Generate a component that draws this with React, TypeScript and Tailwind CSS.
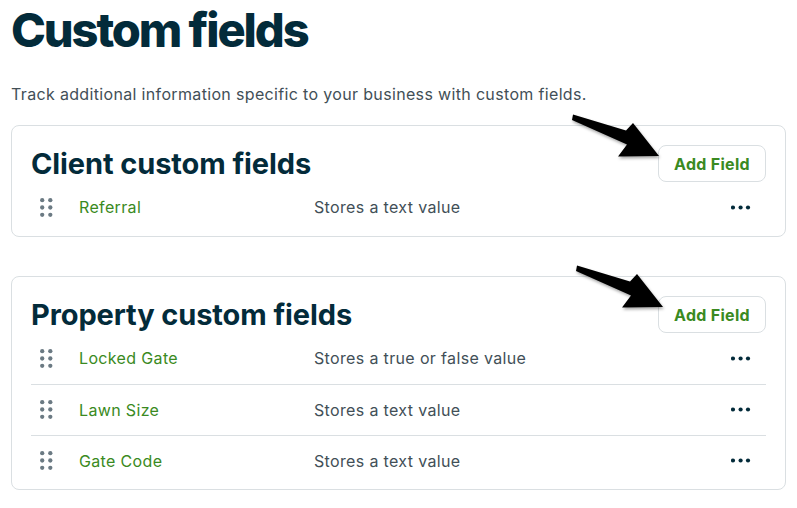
import React from "react";

function DragHandle() {
  return (
    <svg width="13" height="19" viewBox="0 0 13 19" className="shrink-0">
      {[2.2, 9.5, 16.8].map((cy) =>
        [2.2, 10.3].map((cx) => (
          <circle key={`${cx}-${cy}`} cx={cx} cy={cy} r="2.15" fill="#6b7a83" />
        ))
      )}
    </svg>
  );
}

function Dots() {
  return (
    <svg width="20" height="5" viewBox="0 0 20 5">
      <circle cx="2" cy="2.5" r="2.1" fill="#032b3a" />
      <circle cx="9.6" cy="2.5" r="2.1" fill="#032b3a" />
      <circle cx="17" cy="2.5" r="2.1" fill="#032b3a" />
    </svg>
  );
}

function Arrow({ className }: { className: string }) {
  return (
    <svg
      width="100"
      height="56"
      viewBox="0 0 100 56"
      className={className}
      style={{ filter: "drop-shadow(1px 2px 1.5px rgba(0,0,0,0.35))" }}
    >
      <polygon points="8,6.5 61,22.5 68,15 94,48 53,48.5 62,36.5 7,12" fill="#000" />
    </svg>
  );
}

type Field = { name: string; desc: string };

function Card({
  title,
  fields,
  arrowClass,
}: {
  title: string;
  fields: Field[];
  arrowClass: string;
}) {
  return (
    <div className="relative rounded-[8px] border border-[#dadfe2] px-[19px] pt-[19px] pb-[3px]">
      <Arrow className={arrowClass} />
      <div className="flex items-center justify-between">
        <h2 className="text-[29px] leading-[34px] font-bold text-[#032b3a] tracking-[-0.1px]">
          {title}
        </h2>
        <button className="h-[37px] w-[108px] rounded-[8px] border border-[#dadfe2] bg-white text-[16px] font-bold tracking-[0.3px] text-[#3a8a22]">
          Add Field
        </button>
      </div>
      <div>
        {fields.map((f, i) => (
          <div
            key={f.name}
            className={`flex h-[51px] items-center pb-[1px] tracking-[0.35px] ${i > 0 ? "border-t border-[#dadfe2]" : ""}`}
          >
            <div className="w-[48px] pl-[9px] flex items-center">
              <DragHandle />
            </div>
            <div className="w-[235px] text-[16px] text-[#3a8a22]">{f.name}</div>
            <div className="flex-1 text-[16px] text-[#424f57]">{f.desc}</div>
            <div className="pr-[15px] flex items-center">
              <Dots />
            </div>
          </div>
        ))}
      </div>
    </div>
  );
}

export default function App() {
  return (
    <div
      className="w-[797px] h-[508px] bg-white px-[11px] pt-[2px] overflow-hidden"
      style={{ fontFamily: "Inter, 'Noto Sans', sans-serif" }}
    >
      <h1 className="text-[47px] leading-[56px] font-extrabold text-[#032b3a] tracking-[-2.1px]">
        Custom fields
      </h1>
      <p className="mt-[24px] text-[16px] leading-[24px] tracking-[0.34px] text-[#424f57]">
        Track additional information specific to your business with custom fields.
      </p>
      <div className="mt-[19px] w-[775px]">
        <Card
          title="Client custom fields"
          fields={[{ name: "Referral", desc: "Stores a text value" }]}
          arrowClass="absolute left-[553px] top-[-18px] pointer-events-none"
        />
        <div className="h-[39px]" />
        <Card
          title="Property custom fields"
          fields={[
            { name: "Locked Gate", desc: "Stores a true or false value" },
            { name: "Lawn Size", desc: "Stores a text value" },
            { name: "Gate Code", desc: "Stores a text value" },
          ]}
          arrowClass="absolute left-[557px] top-[-18px] pointer-events-none"
        />
      </div>
    </div>
  );
}
